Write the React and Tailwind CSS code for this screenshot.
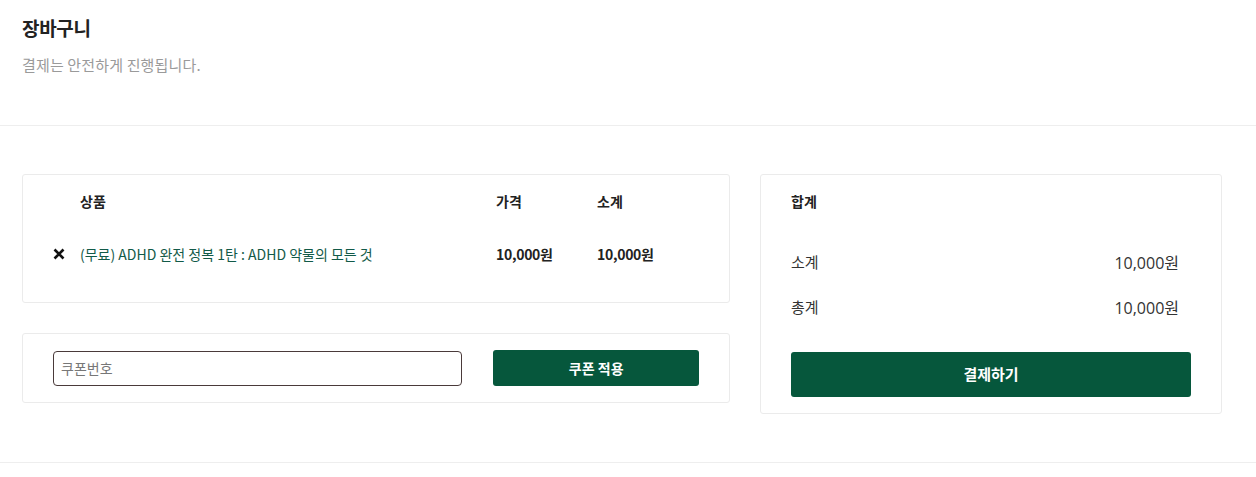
import React from 'react';

const font = { fontFamily: '"Noto Sans CJK KR", "Noto Sans", sans-serif' };
const numFont = { fontFamily: '"Open Sans", "Noto Sans CJK KR", sans-serif' };

function RemoveIcon() {
  return (
    <svg width="12" height="12" viewBox="0 0 12 12" className="block">
      <path d="M1.5 1.5 L10.5 10.5 M10.5 1.5 L1.5 10.5" stroke="#111" strokeWidth="2.6" strokeLinecap="butt" />
    </svg>
  );
}

export default function App() {
  const items = [{ id: 1, name: '(무료) ADHD 완전 정복 1탄 : ADHD 약물의 모든 것', price: '10,000원', subtotal: '10,000원' }];

  return (
    <div className="bg-white min-h-screen text-[#222]" style={font}>
      {/* Page header */}
      <section className="h-[126px] border-b border-[#eeeeee] px-[22px] pt-[14px]">
        <h1 className="text-[19px] font-semibold tracking-[-0.3px] leading-[28px] text-[#222]">장바구니</h1>
        <p className="mt-[12px] text-[15px] leading-[22px] text-[#9a9a9a] tracking-[0.15px]">결제는 안전하게 진행됩니다.</p>
      </section>

      <div className="border-b border-[#eeeeee] px-[22px] pt-[48px] pb-[48px]">
        <div className="flex gap-[30px] items-start">
          {/* Left column */}
          <div className="w-[708px] flex flex-col gap-[30px]">
            <div className="border border-[#ebebeb] rounded-[3px] pb-[22px]">
              <div className="h-[53px] flex items-center text-[14px] font-semibold">
                <div className="w-[57px]" />
                <div className="w-[416px]">상품</div>
                <div className="w-[101px]">가격</div>
                <div>소계</div>
              </div>
              {items.map((item) => (
                <div key={item.id} className="h-[52px] flex items-center text-[14px]">
                  <div className="w-[57px] pl-[30px]">
                    <RemoveIcon />
                  </div>
                  <div className="w-[416px] text-[#125a48]">{item.name}</div>
                  <div className="w-[101px] font-semibold tracking-[-0.3px]">{item.price}</div>
                  <div className="font-semibold tracking-[-0.3px]">{item.subtotal}</div>
                </div>
              ))}
            </div>

            <div className="border border-[#ebebeb] rounded-[3px] px-[30px] py-[16px] flex items-center gap-[31px]">
              <input
                placeholder="쿠폰번호"
                className="w-[410px] h-[35px] border border-[#4a3a3a] rounded-[4px] px-[7px] text-[14px] text-[#333] placeholder-[#777] outline-none"
                style={font}
              />
              <button className="w-[206px] h-[36px] bg-[#06573c] rounded-[3px] text-white text-[14px] font-bold" style={font}>
                쿠폰 적용
              </button>
            </div>
          </div>

          {/* Summary */}
          <div className="w-[462px] border border-[#ebebeb] rounded-[3px] px-[30px] pb-[16px]">
            <div className="h-[53px] flex items-center text-[14px] font-semibold">합계</div>
            <div className="mt-[12px] pr-[12px] text-[15px] text-[#333]">
              <div className="h-[45px] flex items-center justify-between">
                <span>소계</span>
                <span className="text-[16px]" style={numFont}>10,000원</span>
              </div>
              <div className="h-[45px] flex items-center justify-between">
                <span>총계</span>
                <span className="text-[16px]" style={numFont}>10,000원</span>
              </div>
            </div>
            <button className="mt-[22px] w-full h-[45px] bg-[#06573c] rounded-[3px] text-white text-[15px] font-bold" style={font}>
              결제하기
            </button>
          </div>
        </div>
      </div>
    </div>
  );
}
